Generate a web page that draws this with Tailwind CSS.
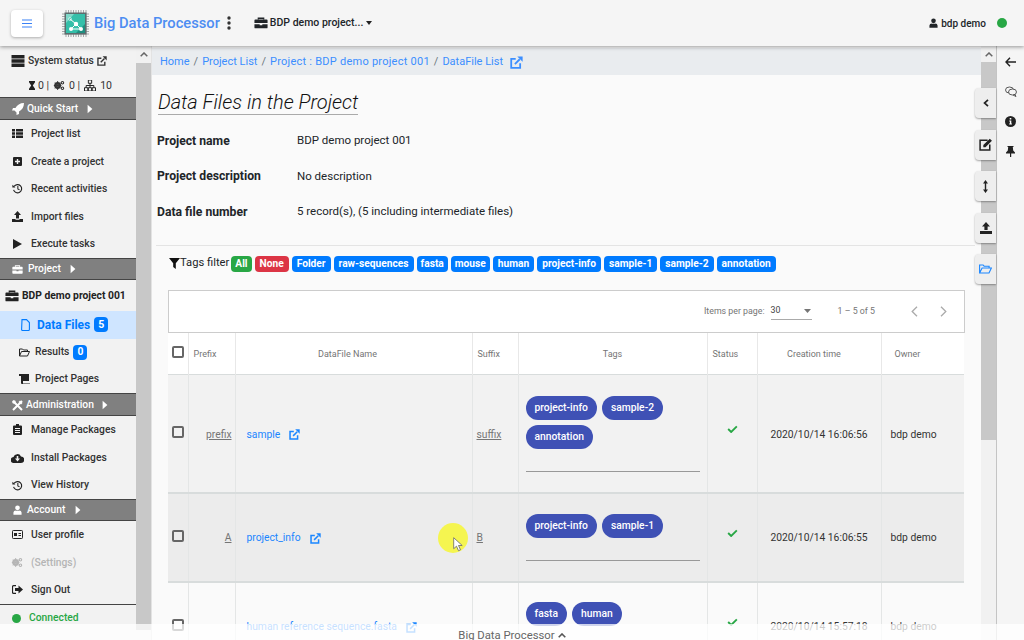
<!DOCTYPE html>
<html lang="en">
<head>
  <meta charset="UTF-8">
  <title>Big Data Processor</title>
  <script src="https://cdn.jsdelivr.net/npm/@tailwindcss/browser@4"></script>
</head>
<body class="relative w-[1024px] h-[640px] overflow-hidden flex flex-col bg-[#f5f5f5] text-[#212529] font-['Roboto',sans-serif]">

  <svg class="hidden">
    <symbol id="ext" viewBox="0 0 16 16"><path d="M12.500 9v5.500h-11v-11H7" fill="none" stroke="currentColor" stroke-width="2.200"/><path d="M6 10l6-6" stroke="currentColor" stroke-width="2.200"/><path d="M9 .5h6.500V7z" fill="currentColor"/></symbol>
    <symbol id="caret" viewBox="0 0 10 16"><path d="M1 1l8 7-8 7z" fill="currentColor"/></symbol>
    <symbol id="history" viewBox="0 0 16 16"><path d="M3 5a6 6 0 1 1-.7 5" fill="none" stroke="currentColor" stroke-width="1.700"/><path d="M0.500 2.500L5 6.500H0.500z" fill="currentColor"/><path d="M8.500 4.500V8.500l2.500 1.500" fill="none" stroke="currentColor" stroke-width="1.500"/></symbol>
    <symbol id="briefcase" viewBox="0 0 16 16"><path d="M5 4V2.500h6V4" fill="none" stroke="currentColor" stroke-width="1.600"/><path d="M1.500 4h13a1 1 0 0 1 1 1v3H.5V5a1 1 0 0 1 1-1zM.5 9.300h6v1.200h3V9.300h6V13a1 1 0 0 1-1 1h-13a1 1 0 0 1-1-1z" fill="currentColor"/></symbol>
    <symbol id="user" viewBox="0 0 14 16"><circle cx="7" cy="4.500" r="3.700" fill="currentColor"/><path d="M.5 15.500V12a3.500 3.500 0 0 1 3.500-3h6a3.500 3.500 0 0 1 3.500 3v3.500z" fill="currentColor"/></symbol>
    <symbol id="check" viewBox="0 0 16 12"><path d="M1.500 6l4.500 4.500L14.500 2" fill="none" stroke="currentColor" stroke-width="2.800"/></symbol>
    <symbol id="cog" viewBox="0 0 16 16"><circle cx="6" cy="8" r="3.500" fill="none" stroke="currentColor" stroke-width="3"/><circle cx="13" cy="4" r="1.800" fill="none" stroke="currentColor" stroke-width="1.600"/><circle cx="13" cy="12" r="1.800" fill="none" stroke="currentColor" stroke-width="1.600"/><path d="M6 1.500v13M.5 8h11M2 4l8 8M10 4l-8 8" stroke="currentColor" stroke-width="1.400"/></symbol>
  </svg>

  <!-- header -->
  <header class="relative z-20 h-[46px] shrink-0 flex items-center bg-[#f5f5f5] shadow-[0_1px_4px_rgba(0,0,0,0.4)]">
    <button class="ml-[11px] w-[32px] h-[27px] flex items-center justify-center bg-white rounded shadow-[0_1px_3px_rgba(0,0,0,0.3)]">
      <svg class="w-[10px] h-[9px] text-[#3b82f6]" viewBox="0 0 10 9"><path d="M0 1h10M0 4.500h10M0 8h10" stroke="currentColor" stroke-width="1.200"/></svg>
    </button>
    <svg class="ml-[18px] w-[29px] h-[29px]" viewBox="0 0 29 29">
      <path d="M5 1v27M7.500 1v27M10 1v27M12.500 1v27M15 1v27M17.500 1v27M20 1v27M22.500 1v27M25 1v27M1 5h27M1 7.500h27M1 10h27M1 12.500h27M1 15h27M1 17.500h27M1 20h27M1 22.500h27M1 25h27" stroke="#9a9f9f" stroke-width="0.900"/>
      <rect x="3.500" y="3.500" width="22" height="22" fill="#5d6b6d"/>
      <rect x="5" y="5" width="19" height="19" fill="#35bfa9"/>
      <path d="M5 5h8L5 14z" fill="#7fd9c9"/>
      <path d="M24 24h-9l9-9z" fill="#1f8f80"/>
      <path d="M9 10l6 5-5 5h10l-5-5" fill="none" stroke="#fff" stroke-width="1"/>
      <circle cx="15" cy="15" r="2.200" fill="#fff"/><circle cx="10" cy="20" r="2" fill="#fff"/><circle cx="20" cy="20" r="2" fill="#fff"/><circle cx="9" cy="10" r="1.500" fill="none" stroke="#d7f5ef" stroke-width="0.700"/>
    </svg>
    <span class="ml-[4px] text-[14.700px] leading-none font-medium text-[#4d8df2] whitespace-nowrap">Big Data Processor</span>
    <svg class="ml-[7px] w-[4px] h-[14px] text-[#333]" viewBox="0 0 4 14"><circle cx="2" cy="2" r="1.700" fill="currentColor"/><circle cx="2" cy="7" r="1.700" fill="currentColor"/><circle cx="2" cy="12" r="1.700" fill="currentColor"/></svg>
    <svg class="ml-[23px] w-[14px] h-[14px]"><use href="#briefcase"/></svg>
    <span class="ml-[2px] text-[10.500px] font-medium whitespace-nowrap">BDP demo project...</span>
    <svg class="ml-[3px] w-[6px] h-[4px]" viewBox="0 0 6 4"><path d="M0 0h6L3 4z" fill="#222"/></svg>
    <div class="ml-auto flex items-center mr-[17px]">
      <svg class="w-[9px] h-[10px]"><use href="#user"/></svg>
      <span class="ml-[3px] text-[10px] font-medium">bdp demo</span>
      <span class="ml-[11px] w-[10px] h-[10px] rounded-full bg-[#28a745]"></span>
    </div>
  </header>

  <div class="flex flex-1 min-h-0">
    <!-- sidebar -->
    <aside class="w-[136px] shrink-0 bg-[#f2f2f2] text-[10.300px] font-medium text-[#333]">
      <div class="h-[28px] pt-[1px] flex items-center pl-[11px]">
        <svg class="w-[14px] h-[12px]" viewBox="0 0 13 12"><path d="M0 0h13v3.500H0zM0 4.300h13v3.500H0zM0 8.600h13V12H0z" fill="#222"/></svg>
        <span class="ml-[3px]">System status</span>
        <svg class="ml-[3px] w-[10px] h-[10px]"><use href="#ext"/></svg>
      </div>
      <div class="h-[23px] flex items-center pl-[29px] font-normal text-[10.500px]">
        <svg class="w-[6px] h-[9px]" viewBox="0 0 6 9"><path d="M0 0h6v1.200L3.800 4.500 6 7.800V9H0V7.800l2.200-3.300L0 1.200z" fill="#222"/></svg>
        <span class="ml-[3px]">0 |</span>
        <svg class="ml-[4px] w-[12px] h-[11px]"><use href="#cog"/></svg>
        <span class="ml-[4px]">0 |</span>
        <svg class="ml-[4px] w-[12px] h-[11px]" viewBox="0 0 10 10"><path d="M3.500 0h3v3h-3zM0 7h3v3H0zM3.500 7h3v3h-3zM7 7h3v3H7zM1.500 7V5h7v2M5 3v4" fill="none" stroke="#222" stroke-width="0.900"/></svg>
        <span class="ml-[4px]">10</span>
      </div>

      <div class="h-[23px] flex items-center pl-[12px] bg-[#808080] border-t border-b border-[#444] text-white">
        <svg class="w-[12px] h-[12px]" viewBox="0 0 12 12"><path d="M12 0C8 0 5 2 3.500 5H1L0 7.500h2.500l2 2V12L7 11V8.500C10 7 12 4 12 0z" fill="#fff"/></svg>
        <span class="ml-[3px]">Quick Start</span>
        <svg class="ml-[9px] w-[6px] h-[10px] text-white"><use href="#caret"/></svg>
      </div>
      <div class="h-[27.500px] flex items-center pl-[12px]">
        <svg class="w-[11px] h-[9px]" viewBox="0 0 11 9"><path d="M0 0h3v2.500H0zM4 0h7v2.500H4zM0 3.300h3v2.500H0zM4 3.300h7v2.500H4zM0 6.500h3V9H0zM4 6.500h7V9H4z" fill="#222"/></svg>
        <span class="ml-[8px]">Project list</span>
      </div>
      <div class="h-[27.500px] flex items-center pl-[13px]">
        <svg class="w-[9px] h-[9px]" viewBox="0 0 9 9"><path d="M1 0h7a1 1 0 0 1 1 1v7a1 1 0 0 1-1 1H1a1 1 0 0 1-1-1V1a1 1 0 0 1 1-1zM3.800 2v1.800H2v1.400h1.800V7h1.400V5.200H7V3.800H5.200V2z" fill="#222" fill-rule="evenodd"/></svg>
        <span class="ml-[9px]">Create a project</span>
      </div>
      <div class="h-[27.500px] flex items-center pl-[12px]">
        <svg class="w-[11px] h-[11px] text-[#222]"><use href="#history"/></svg>
        <span class="ml-[8px]">Recent activities</span>
      </div>
      <div class="h-[27.500px] flex items-center pl-[12px]">
        <svg class="w-[11px] h-[11px]" viewBox="0 0 11 11"><path d="M5.500 0L9 4H7v3.500H4V4H2zM0 8h3.500v.8h4V8H11v3H0z" fill="#222"/></svg>
        <span class="ml-[8px]">Import files</span>
      </div>
      <div class="h-[27.500px] flex items-center pl-[13px]">
        <svg class="w-[9px] h-[10px]" viewBox="0 0 9 10"><path d="M0 0l9 5-9 5z" fill="#222"/></svg>
        <span class="ml-[9px]">Execute tasks</span>
      </div>

      <div class="h-[22px] pt-[1px] flex items-center pl-[12px] bg-[#808080] border-t border-b border-[#444] text-white">
        <svg class="w-[11px] h-[11px] text-white"><use href="#briefcase"/></svg>
        <span class="ml-[5px]">Project</span>
        <svg class="ml-[9px] w-[6px] h-[10px] text-white"><use href="#caret"/></svg>
      </div>
      <div class="h-[31px] pt-[1px] flex items-center pl-[5px] font-bold text-[#222]">
        <svg class="w-[14px] h-[14px]"><use href="#briefcase"/></svg>
        <span class="ml-[3px]">BDP demo project 001</span>
      </div>
      <div class="h-[28px] flex items-center pl-[21px] bg-[#cfe5ff] text-[#007bff] text-[12px] font-bold">
        <svg class="w-[9px] h-[12px]" viewBox="0 0 9 12"><path d="M1 .6h4.500L8.400 3.500V10.500a1 1 0 0 1-1 1H1.600a1 1 0 0 1-1-1z" fill="none" stroke="#007bff" stroke-width="1.100"/></svg>
        <span class="ml-[7px]">Data Files</span>
        <span class="ml-[4px] w-[14px] h-[15px] flex items-center justify-center rounded-sm bg-[#007bff] text-white text-[10.500px]">5</span>
      </div>
      <div class="h-[27px] flex items-center pl-[19px]">
        <svg class="w-[11px] h-[9px]" viewBox="0 0 11 9"><path d="M.5 8V1h3l1 1h4v1.500M.5 8l2-4.500h8L8.500 8z" fill="none" stroke="#222" stroke-width="1"/></svg>
        <span class="ml-[5px]">Results</span>
        <span class="ml-[4px] w-[14px] h-[15px] flex items-center justify-center rounded-sm bg-[#007bff] text-white font-bold">0</span>
      </div>
      <div class="h-[27px] flex items-center pl-[19px]">
        <svg class="w-[11px] h-[10px]" viewBox="0 0 11 10"><path d="M0 0h2v2H0zM2 0h8v7H4v2.500h7V10H3a1 1 0 0 1-1-1z" fill="#222"/></svg>
        <span class="ml-[5px]">Project Pages</span>
      </div>

      <div class="h-[23px] pt-[2px] flex items-center pl-[12px] bg-[#808080] border-t border-b border-[#444] text-white">
        <svg class="w-[11px] h-[11px]" viewBox="0 0 11 11"><path d="M1 1l9 9M10 1l-9 9" stroke="#fff" stroke-width="2"/><circle cx="2" cy="2" r="1.800" fill="#fff"/><path d="M8 .5l2.500 2.500L9 4.500 6.500 2z" fill="#fff"/></svg>
        <span class="ml-[3px]">Administration</span>
        <svg class="ml-[8px] w-[6px] h-[10px] text-white"><use href="#caret"/></svg>
      </div>
      <div class="h-[28px] flex items-center pl-[13px]">
        <svg class="w-[9px] h-[11px]" viewBox="0 0 9 11"><path d="M3 0h3v1.500h2a1 1 0 0 1 1 1V10a1 1 0 0 1-1 1H1a1 1 0 0 1-1-1V2.500a1 1 0 0 1 1-1h2zM2 4v1h5V4zM2 6v1h5V6zM2 8v1h5V8z" fill="#222" fill-rule="evenodd"/></svg>
        <span class="ml-[9px]">Manage Packages</span>
      </div>
      <div class="h-[28px] flex items-center pl-[11px]">
        <svg class="w-[13px] h-[10px]" viewBox="0 0 13 10"><path d="M3 10a3 3 0 0 1-.5-6A4 4 0 0 1 10 3.500 3.200 3.200 0 0 1 10 10zM5.700 3v2.500H4l2.500 3 2.500-3H7.300V3z" fill="#222" fill-rule="evenodd"/></svg>
        <span class="ml-[7px]">Install Packages</span>
      </div>
      <div class="h-[27px] flex items-center pl-[12px]">
        <svg class="w-[11px] h-[11px] text-[#222]"><use href="#history"/></svg>
        <span class="ml-[8px]">View History</span>
      </div>

      <div class="h-[22px] pt-[1px] flex items-center pl-[13px] bg-[#808080] border-t border-b border-[#444] text-white">
        <svg class="w-[9px] h-[10px] text-white"><use href="#user"/></svg>
        <span class="ml-[5px]">Account</span>
        <svg class="ml-[10px] w-[6px] h-[10px] text-white"><use href="#caret"/></svg>
      </div>
      <div class="h-[28px] flex items-center pl-[12px]">
        <svg class="w-[11px] h-[9px]" viewBox="0 0 11 9"><rect x=".5" y=".5" width="10" height="8" rx=".8" fill="none" stroke="#222"/><path d="M2 3h3v3H2zM6.500 3H9v1H6.500zM6.500 5H9v1H6.500z" fill="#222"/></svg>
        <span class="ml-[8px]">User profile</span>
      </div>
      <div class="h-[27.500px] flex items-center pl-[11px] text-[#b5b5b5]">
        <svg class="w-[12px] h-[11px]"><use href="#cog"/></svg>
        <span class="ml-[8px]">(Settings)</span>
      </div>
      <div class="h-[27.500px] flex items-center pl-[12px]">
        <svg class="w-[11px] h-[9px]" viewBox="0 0 11 9"><path d="M4 .7H1.500a1 1 0 0 0-1 1v5.600a1 1 0 0 0 1 1H4" fill="none" stroke="#222" stroke-width="1.200"/><path d="M3 3h3.500V.5L11 4.500 6.500 8.500V6H3z" fill="#222"/></svg>
        <span class="ml-[8px]">Sign Out</span>
      </div>
      <div class="h-[28px] flex items-center pl-[12px] border-t border-[#444] text-[#28a745]">
        <span class="w-[9px] h-[9px] rounded-full bg-[#28a745]"></span>
        <span class="ml-[8px]">Connected</span>
      </div>
    </aside>

    <!-- sidebar scrollbar -->
    <div class="w-[16px] shrink-0 flex flex-col border-r border-[#e3e3e3] bg-[#f1f1f1]">
      <div class="h-[17px] flex items-center justify-center">
        <svg class="w-[8px] h-[5px]" viewBox="0 0 8 5"><path d="M.7 4.300L4 1l3.300 3.300" fill="none" stroke="#666" stroke-width="1.500"/></svg>
      </div>
      <div class="h-[567px] w-[15px] bg-[#c8c8c8]"></div>
    </div>

    <!-- main -->
    <main class="w-[829px] shrink-0 overflow-hidden bg-[#fafafa]">
      <nav class="mt-[2px] h-[27px] pt-[2px] flex items-center gap-[4px] pl-[8px] bg-[#e9ecef] text-[11px] text-[#3b8eff]">
        <span>Home</span><span class="text-[#6c757d]">/</span><span>Project List</span><span class="text-[#6c757d]">/</span><span class="tracking-[0.25px]">Project : BDP demo project 001</span><span class="text-[#6c757d]">/</span><span>DataFile List</span>
        <svg class="ml-[3px] w-[13px] h-[13px]"><use href="#ext"/></svg>
      </nav>

      <h1 class="mt-[15px] ml-[6px] w-fit text-[20px] leading-[24px] italic font-light text-[#111] border-b border-[#aaa]">Data Files in the Project</h1>

      <dl class="mt-[8px] ml-[5px] text-[11.500px]">
        <div class="h-[35.500px] flex items-center"><dt class="w-[140px] font-bold text-[12.200px]">Project name</dt><dd>BDP demo project 001</dd></div>
        <div class="h-[35.500px] flex items-center"><dt class="w-[140px] font-bold text-[12.200px]">Project description</dt><dd>No description</dd></div>
        <div class="h-[35.500px] flex items-center"><dt class="w-[140px] font-bold text-[12.200px]">Data file number</dt><dd>5 record(s), (5 including intermediate files)</dd></div>
      </dl>

      <div class="mt-[15px] ml-[4px] w-[819px] border-t border-[#e4e4e4]"></div>

      <div class="mt-[10px] h-[16px] ml-[17px] flex items-center text-[11.200px]">
        <svg class="w-[11px] h-[11px]" viewBox="0 0 11 11"><path d="M0 0h11L6.800 5.200V11L4.200 9V5.200z" fill="#111"/></svg>
        <span class="mr-[2px]">Tags filter</span>
        <div class="flex gap-[3px] text-[10.200px] font-bold text-white leading-[16px]">
          <span class="px-[4px] rounded-sm bg-[#28a745]">All</span>
          <span class="px-[5px] rounded-sm bg-[#dc3545]">None</span>
          <span class="px-[5px] rounded-sm bg-[#007bff]">Folder</span>
          <span class="px-[5px] rounded-sm bg-[#007bff]">raw-sequences</span>
          <span class="px-[4px] rounded-sm bg-[#007bff]">fasta</span>
          <span class="px-[4px] rounded-sm bg-[#007bff]">mouse</span>
          <span class="px-[5px] rounded-sm bg-[#007bff]">human</span>
          <span class="px-[5px] rounded-sm bg-[#007bff]">project-info</span>
          <span class="px-[5px] rounded-sm bg-[#007bff]">sample-1</span>
          <span class="px-[5px] rounded-sm bg-[#007bff]">sample-2</span>
          <span class="px-[5px] rounded-sm bg-[#007bff]">annotation</span>
        </div>
      </div>

      <div class="mt-[18px] ml-[16px] w-[797px]">
        <div class="h-[43px] pt-[1px] flex items-center justify-end bg-white border border-[#ccc] text-[8.800px] text-[#757575]">
          <span>Items per page:</span>
          <div class="ml-[6px] w-[41px] h-[16px] flex items-center justify-between border-b border-[#aaa] text-[#444]">
            <span>30</span>
            <svg class="mr-[1px] w-[7px] h-[4px]" viewBox="0 0 7 4"><path d="M0 0h7L3.500 4z" fill="#757575"/></svg>
          </div>
          <span class="ml-[26px]">1 – 5 of 5</span>
          <svg class="ml-[36px] w-[7px] h-[11px]" viewBox="0 0 7 11"><path d="M6 .7L1.200 5.500 6 10.300" fill="none" stroke="#aaa" stroke-width="1.300"/></svg>
          <svg class="ml-[22px] mr-[17px] w-[7px] h-[11px]" viewBox="0 0 7 11"><path d="M1 .7l4.800 4.800L1 10.300" fill="none" stroke="#aaa" stroke-width="1.300"/></svg>
        </div>
        <table class="w-[796px] table-fixed border-collapse text-[10.300px] text-[#333]">
          <colgroup>
            <col class="w-[20px]"><col class="w-[47px]"><col class="w-[237px]"><col class="w-[46px]"><col class="w-[189px]"><col class="w-[50px]"><col class="w-[124px]"><col class="w-[83px]">
          </colgroup>
          <thead class="text-[9px] text-[#757575] font-normal">
            <tr class="h-[42px] bg-white border-b border-[#d8dcdc]">
              <th class="border-r border-[#e8e8e8] font-normal">
                <span class="block mx-auto -mt-[2px] w-[12px] h-[12px] border-2 border-[#666] rounded-[2px]"></span>
              </th>
              <th class="border-r border-[#e8e8e8] font-normal text-left pt-[2px] pl-[5px]">Prefix</th>
              <th class="border-r border-[#e8e8e8] font-normal pt-[2px] pr-[12px]">DataFile Name</th>
              <th class="border-r border-[#e8e8e8] font-normal text-left pt-[2px] pl-[5px]">Suffix</th>
              <th class="border-r border-[#e8e8e8] font-normal pt-[2px]">Tags</th>
              <th class="border-r border-[#e8e8e8] font-normal text-left pt-[2px] pl-[5px]">Status</th>
              <th class="border-r border-[#e8e8e8] font-normal pt-[2px] pr-[10px]">Creation time</th>
              <th class="font-normal text-left pt-[2px] pl-[13px]">Owner</th>
            </tr>
          </thead>
          <tbody>
            <tr class="h-[118px] bg-[#f2f2f2] border-b-2 border-[#d8dcdc]">
              <td class="border-r border-[#e4e6e6]"><span class="block mx-auto -mt-[2px] w-[12px] h-[12px] border-2 border-[#666] rounded-[2px]"></span></td>
              <td class="border-r border-[#e4e6e6] pt-[2px] text-right pr-[3px] text-[#757575] underline">prefix</td>
              <td class="border-r border-[#e4e6e6] pt-[2px] pl-[11px] text-[#1a86ff]"><span class="flex items-center">sample<svg class="ml-[9px] w-[11px] h-[11px]"><use href="#ext"/></svg></span></td>
              <td class="border-r border-[#e4e6e6] pt-[2px] pl-[4px] text-[#757575] underline">suffix</td>
              <td class="border-r border-[#e4e6e6] px-[7px] align-top">
                <div class="pt-[21px] flex flex-wrap gap-x-[5px] gap-y-[5px] h-[97px] border-b border-[#999] content-start font-medium text-white">
                  <span class="h-[24px] px-[9px] flex items-center rounded-full bg-[#3f51b5]">project-info</span>
                  <span class="h-[24px] px-[9px] flex items-center rounded-full bg-[#3f51b5]">sample-2</span>
                  <span class="h-[24px] px-[9px] flex items-center rounded-full bg-[#3f51b5]">annotation</span>
                </div>
              </td>
              <td class="border-r border-[#e4e6e6]"><svg class="mx-auto -mt-[8px] w-[11px] h-[8px] text-[#28a745]"><use href="#check"/></svg></td>
              <td class="border-r border-[#e4e6e6] pt-[2px] text-center">2020/10/14 16:06:56</td>
              <td class="pt-[2px] pl-[9px]">bdp demo</td>
            </tr>
            <tr class="h-[89px] bg-[#ececec] border-b-2 border-[#d8dcdc]">
              <td class="border-r border-[#e4e6e6]"><span class="block mx-auto -mt-[2px] w-[12px] h-[12px] border-2 border-[#666] rounded-[2px]"></span></td>
              <td class="border-r border-[#e4e6e6] pt-[2px] text-right pr-[3px] text-[#757575] underline">A</td>
              <td class="border-r border-[#e4e6e6] pt-[2px] pl-[11px] text-[#1a86ff]"><span class="flex items-center">project_info<svg class="ml-[9px] w-[11px] h-[11px]"><use href="#ext"/></svg></span></td>
              <td class="border-r border-[#e4e6e6] pt-[2px] pl-[4px] text-[#757575] underline">B</td>
              <td class="border-r border-[#e4e6e6] px-[7px] align-top">
                <div class="pt-[20px] flex flex-wrap gap-x-[5px] h-[67px] border-b border-[#999] content-start font-medium text-white">
                  <span class="h-[24px] px-[9px] flex items-center rounded-full bg-[#3f51b5]">project-info</span>
                  <span class="h-[24px] px-[9px] flex items-center rounded-full bg-[#3f51b5]">sample-1</span>
                </div>
              </td>
              <td class="border-r border-[#e4e6e6]"><svg class="mx-auto -mt-[8px] w-[11px] h-[8px] text-[#28a745]"><use href="#check"/></svg></td>
              <td class="border-r border-[#e4e6e6] pt-[2px] text-center">2020/10/14 16:06:55</td>
              <td class="pt-[2px] pl-[9px]">bdp demo</td>
            </tr>
            <tr class="h-[88px] bg-[#fafafa]">
              <td class="border-r border-[#e4e6e6]"><span class="block mx-auto -mt-[2px] w-[12px] h-[12px] border-2 border-[#666] rounded-[2px]"></span></td>
              <td class="border-r border-[#e4e6e6]"></td>
              <td class="border-r border-[#e4e6e6] pt-[2px] pl-[11px] text-[#1a86ff]"><span class="flex items-center whitespace-nowrap">human reference sequence.fasta<svg class="ml-[9px] w-[11px] h-[11px]"><use href="#ext"/></svg></span></td>
              <td class="border-r border-[#e4e6e6]"></td>
              <td class="border-r border-[#e4e6e6] px-[7px] align-top">
                <div class="pt-[19px] flex flex-wrap gap-x-[5px] gap-y-[5px] content-start font-medium text-white">
                  <span class="h-[24px] px-[9px] flex items-center rounded-full bg-[#3f51b5]">fasta</span>
                  <span class="h-[24px] px-[9px] flex items-center rounded-full bg-[#3f51b5]">human</span>
                </div>
              </td>
              <td class="border-r border-[#e4e6e6]"><svg class="mx-auto -mt-[8px] w-[11px] h-[8px] text-[#28a745]"><use href="#check"/></svg></td>
              <td class="border-r border-[#e4e6e6] pt-[2px] text-center">2020/10/14 15:57:18</td>
              <td class="pt-[2px] pl-[9px]">bdp demo</td>
            </tr>
          </tbody>
        </table>
      </div>
    </main>

    <!-- main scrollbar -->
    <div class="w-[15px] shrink-0 flex flex-col bg-[#f1f1f1]">
      <div class="h-[16px] flex items-center justify-center bg-[#f1f1f1]">
        <svg class="w-[8px] h-[5px]" viewBox="0 0 8 5"><path d="M.7 4.300L4 1l3.300 3.300" fill="none" stroke="#666" stroke-width="1.500"/></svg>
      </div>
      <div class="h-[378px] bg-[#c8c8c8]"></div>
    </div>

    <!-- right panel -->
    <div class="flex-1 flex flex-col items-center pt-[11px] gap-[19px] border-l border-[#c4c4c4] bg-[#f5f5f5]">
      <svg class="w-[11px] h-[10px]" viewBox="0 0 11 10"><path d="M5 .7L1 5l4 4.300M1 5h10" fill="none" stroke="#222" stroke-width="1.400"/></svg>
      <svg class="w-[12px] h-[11px]" viewBox="0 0 12 11"><ellipse cx="4.500" cy="4" rx="4" ry="3" fill="#f5f5f5" stroke="#333" stroke-width=".8"/><ellipse cx="7.500" cy="6" rx="4" ry="3" fill="#f5f5f5" stroke="#333" stroke-width=".8"/><path d="M10 8.500l1 2-3-1.500" fill="none" stroke="#333" stroke-width=".8"/></svg>
      <svg class="w-[11px] h-[11px]" viewBox="0 0 11 11"><circle cx="5.500" cy="5.500" r="5.500" fill="#222"/><path d="M4.700 2h1.600v1.500H4.700zM4.300 4.600h2v3h.6v1H4.200v-1h.7v-2h-.6z" fill="#fff"/></svg>
      <svg class="w-[9px] h-[11px]" viewBox="0 0 9 11"><path d="M1.500 0h6v1H6.800l.4 3.500L9 6.500V7.500H5.200V11h-1.200V7.500H0V6.500L1.800 4.500 2.200 1H1.500z" fill="#222"/></svg>
    </div>
  </div>

  <!-- floating tabs over the scrollbar -->
  <div class="absolute left-[975px] top-[88px] flex flex-col gap-[11.500px]">
    <div class="w-[21px] h-[30px] flex items-center justify-center rounded-l-sm bg-[#eeeeee] shadow-[0_1px_2px_rgba(0,0,0,0.35)]">
      <svg class="w-[6px] h-[8px]" viewBox="0 0 6 8"><path d="M5 .8L1.500 4 5 7.200" fill="none" stroke="#222" stroke-width="1.700"/></svg>
    </div>
    <div class="w-[21px] h-[30px] flex items-center justify-center rounded-l-sm bg-[#eeeeee] shadow-[0_1px_2px_rgba(0,0,0,0.35)]">
      <svg class="w-[14px] h-[13px]" viewBox="0 0 13 12"><path d="M8 2H1v9h9V6" fill="none" stroke="#222" stroke-width="1.400"/><path d="M4 6.500L10 .7 12 2.500 6 8.500H4z" fill="#222"/></svg>
    </div>
    <div class="w-[21px] h-[30px] flex items-center justify-center rounded-l-sm bg-[#eeeeee] shadow-[0_1px_2px_rgba(0,0,0,0.35)]">
      <svg class="w-[5px] h-[13px]" viewBox="0 0 5 13"><path d="M2.500 0L5 3.500H3.200v6H5L2.500 13 0 9.500h1.800v-6H0z" fill="#222"/></svg>
    </div>
    <div class="w-[21px] h-[30px] flex items-center justify-center rounded-l-sm bg-[#eeeeee] shadow-[0_1px_2px_rgba(0,0,0,0.35)]">
      <svg class="w-[12px] h-[12px]" viewBox="0 0 12 12"><path d="M6 0l4 4.500H7.600V8H4.400V4.500H2zM0 9h12v3H0z" fill="#222"/></svg>
    </div>
    <div class="w-[21px] h-[30px] flex items-center justify-center rounded-l-sm bg-[#eeeeee] shadow-[0_1px_2px_rgba(0,0,0,0.35)]">
      <svg class="w-[13px] h-[10px]" viewBox="0 0 13 10"><path d="M.6 9V1h3.500l1 1.200h5V4M.6 9l2.500-5h9.300L10 9z" fill="none" stroke="#1a86ff" stroke-width="1.100"/></svg>
    </div>
  </div>

  <!-- cursor highlight -->
  <div class="absolute left-[438px] top-[523px] w-[30px] h-[30px] rounded-full bg-[#f5f550]"></div>
  <svg class="absolute left-[453px] top-[537px] w-[10px] h-[15px]" viewBox="0 0 10 15"><path d="M.7.7v11l2.800-2.500 2 4.500 2-.9-2-4.300h3.700z" fill="#fff" stroke="#666" stroke-width=".8"/></svg>

  <!-- footer overlay -->
  <footer class="absolute left-0 right-0 bottom-0 h-[16px] pt-[7px] leading-none flex items-center justify-center gap-[3px] bg-white/75 text-[11.300px] text-[#666]">
    Big Data Processor
    <svg class="w-[8px] h-[5px]" viewBox="0 0 8 5"><path d="M.7 4.300L4 1l3.300 3.300" fill="none" stroke="#555" stroke-width="1.600"/></svg>
  </footer>
</body>
</html>
